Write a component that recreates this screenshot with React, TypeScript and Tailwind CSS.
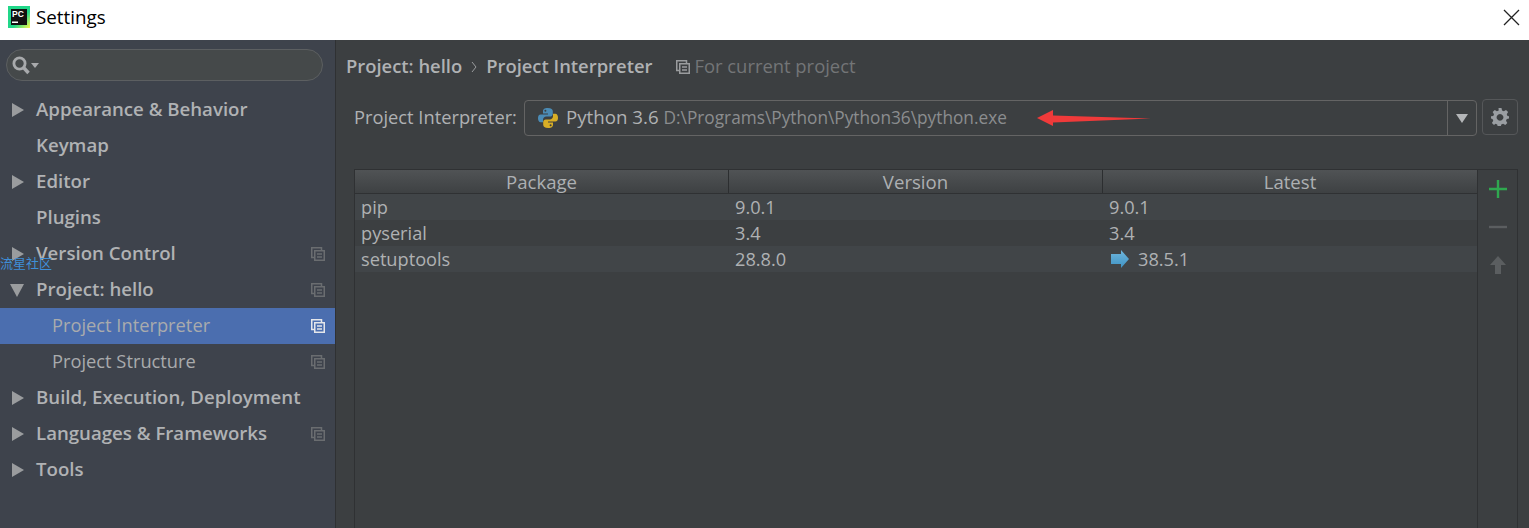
const font = { fontFamily: '"Open Sans", "Noto Sans", sans-serif' };

function CopyIcon({ color = "#6a6d70", className = "" }: { color?: string; className?: string }) {
  return (
    <svg width="14" height="14" viewBox="0 0 14 14" fill="none" className={className}>
      <path d="M4 10.5H.75V.75H10.5V4" stroke={color} strokeWidth="1.5" />
      <rect x="3.75" y="3.75" width="9.5" height="9.5" stroke={color} strokeWidth="1.5" />
      <path d="M6 7h5M6 10h5" stroke={color} strokeWidth="1.5" />
    </svg>
  );
}

function Row({
  label,
  arrow,
  bold = true,
  indent = false,
  copy = false,
  selected = false,
}: {
  label: string;
  arrow?: "right" | "down";
  bold?: boolean;
  indent?: boolean;
  copy?: boolean;
  selected?: boolean;
}) {
  return (
    <div className={`flex h-9 items-center pr-[10px] ${selected ? "bg-[#4b6eaf]" : ""}`}>
      <div className="flex w-9 shrink-0 items-center pl-[12px]">
        {arrow === "right" && <div className="h-0 w-0 border-y-[7px] border-l-[12px] border-y-transparent border-l-[#9a9c9e]" />}
        {arrow === "down" && <div className="-ml-[2px] h-0 w-0 border-x-[7.5px] border-t-[13px] border-x-transparent border-t-[#9a9c9e]" />}
      </div>
      <span
        className={`flex-1 whitespace-nowrap pb-[2px] leading-none ${bold ? "text-[18.65px] font-semibold text-[#b0b2b4]" : "text-[18.3px] text-[#a9abad]"} ${indent ? "pl-4" : ""}`}
      >
        {label}
      </span>
      {copy && <CopyIcon color={selected ? "#e4e6ea" : "#6a6d70"} />}
    </div>
  );
}

function Sidebar() {
  return (
    <aside className="relative w-[336px] shrink-0 border-r border-[#2f3133] bg-[#3e434c]">
      <div className="px-[6px] pt-[9px]">
        <div className="flex h-8 w-[317px] items-center gap-[1px] rounded-2xl border border-[#5c5f61] bg-[#45494a] pl-[5px]">
          <svg width="18" height="19" viewBox="0 0 18 19" fill="none">
            <circle cx="7.5" cy="7.5" r="5.6" stroke="#a8aaac" strokeWidth="2.8" />
            <path d="M11.5 11.5 16.5 17" stroke="#a8aaac" strokeWidth="3.4" />
          </svg>
          <div className="h-0 w-0 border-x-[4px] border-t-[5px] border-x-transparent border-t-[#a8aaac]" />
        </div>
      </div>
      <div className="mt-[11px]">
        <Row label="Appearance & Behavior" arrow="right" />
        <Row label="Keymap" />
        <Row label="Editor" arrow="right" />
        <Row label="Plugins" />
        <Row label="Version Control" arrow="right" copy />
        <Row label="Project: hello" arrow="down" copy />
        <Row label="Project Interpreter" bold={false} indent copy selected />
        <Row label="Project Structure" bold={false} indent copy />
        <Row label="Build, Execution, Deployment" arrow="right" />
        <Row label="Languages & Frameworks" arrow="right" copy />
        <Row label="Tools" arrow="right" />
      </div>
      <span className="absolute left-0 top-[215px] text-[13px] leading-4 text-[#3f8fd8]" style={{ fontFamily: '"Noto Sans CJK SC", sans-serif' }}>
        流星社区
      </span>
    </aside>
  );
}

function PythonIcon() {
  return (
    <svg width="22" height="22" viewBox="0 0 22 22">
      <path d="M10.8 1C7 1 6 2.4 6 4.2V6.4h5v1H3.7C1.8 7.4 1 9 1 11.2s.9 4 2.7 4H6V12.8c0-1.8 1.5-3.2 3.2-3.2h4c1.4 0 2.6-1.2 2.6-2.6V4.2C15.8 2.4 14.4 1 10.8 1Z" fill="#4b8bb5" />
      <circle cx="8.4" cy="3.7" r="1" fill="#3c3f41" />
      <path d="M11.2 21c3.8 0 4.8-1.4 4.8-3.2v-2.2h-5v-1h7.3c1.9 0 2.7-1.6 2.7-3.8s-.9-4-2.7-4H16v2.4c0 1.8-1.5 3.2-3.2 3.2h-4C7.4 12.4 6.2 13.6 6.2 15v2.8c0 1.8 1.4 3.200 5 3.200Z" fill="#d8ae26" />
      <circle cx="13.6" cy="18.3" r="1" fill="#3c3f41" />
    </svg>
  );
}

function Combo() {
  return (
    <div className="relative flex h-9 w-[953px] items-center rounded-[4px] border border-[#646464] pl-[12px]">
      <PythonIcon />
      <span className="ml-[7px] whitespace-nowrap pb-[2px] text-[18.7px] leading-none text-[#b0b2b4]">Python 3.6</span>
      <span className="ml-[5px] whitespace-nowrap pb-[1px] text-[17.25px] leading-none text-[#8b8d8f]">D:\Programs\Python\Python36\python.exe</span>
      <svg className="absolute left-[511px] top-[7px]" width="116" height="20" viewBox="0 0 116 20">
        <path d="M1 10 17 2V7.5L115 10.5 17 14.5V18Z" fill="#f03a3a" />
      </svg>
      <div className="ml-auto flex h-full w-[29px] items-center justify-center border-l border-[#646464]">
        <div className="h-0 w-0 border-x-[6px] border-t-[9px] border-x-transparent border-t-[#b4b6b8]" />
      </div>
    </div>
  );
}

function Header({ children, w, last }: { children: string; w: string; last?: boolean }) {
  return (
    <div className={`flex h-full items-center justify-center pt-[1px] text-[18.6px] leading-none text-[#adb0b3] ${w} ${last ? "" : "border-r border-[#2c2e30]"}`}>
      {children}
    </div>
  );
}

function TableRow({ a, b, c, alt, update }: { a: string; b: string; c: string; alt: boolean; update?: boolean }) {
  return (
    <div className={`flex h-[26px] items-center text-[18.2px] leading-none text-[#afb1b3] ${alt ? "bg-[#414548]" : ""}`}>
      <div className="w-[374px] pl-[6px]">{a}</div>
      <div className="w-[374px] pl-[6px]">{b}</div>
      <div className="flex flex-1 items-center gap-[9px] pl-[6px]">
        {update && (
          <svg className="ml-[2px]" width="18" height="18" viewBox="0 0 18 18">
            <defs>
              <linearGradient id="upd" x1="0" y1="0" x2="0" y2="1">
                <stop offset="0" stopColor="#6fb6dc" />
                <stop offset="1" stopColor="#3f93c4" />
              </linearGradient>
            </defs>
            <path d="M0 4h10V0l8 9-8 9v-4H0Z" fill="url(#upd)" />
          </svg>
        )}
        {c}
      </div>
    </div>
  );
}

export default function App() {
  return (
    <div className="flex h-[528px] w-[1529px] flex-col overflow-hidden bg-[#3c3f41]" style={font}>
      <header className="flex h-10 shrink-0 items-center bg-white pb-[6px] pl-2 pr-[9px]">
        <svg width="22" height="22" viewBox="0 0 22 22">
          <defs>
            <linearGradient id="pc" x1="0" y1="0" x2="1" y2="1">
              <stop offset="0" stopColor="#21d789" />
              <stop offset="0.6" stopColor="#21d789" />
              <stop offset="1" stopColor="#fcf84a" />
            </linearGradient>
          </defs>
          <rect width="22" height="22" fill="url(#pc)" />
          <rect x="3" y="3" width="16" height="16" fill="#111" />
          <text x="4" y="11" fontSize="8.5" fontWeight="700" fill="#fff" fontFamily="Liberation Sans">PC</text>
          <rect x="4" y="15.5" width="6" height="1.5" fill="#fff" />
        </svg>
        <span className="ml-[6px] text-[18.8px] leading-none text-black">Settings</span>
        <svg className="ml-auto" width="17" height="17" viewBox="0 0 17 17">
          <path d="M1 1 16 16M16 1 1 16" stroke="#222" strokeWidth="1.3" />
        </svg>
      </header>
      <div className="flex min-h-0 flex-1">
        <Sidebar />
        <main className="flex min-w-0 flex-1 flex-col">
          <div className="flex h-[52px] items-center pl-[10px] pt-[1px] text-[18.4px] leading-none">
            <span className="font-semibold text-[#b0b2b4]">Project: hello</span>
            <svg className="mx-[9px]" width="6" height="12" viewBox="0 0 6 12" fill="none">
              <path d="M1 1 5 6 1 11" stroke="#9a9c9e" strokeWidth="1" />
            </svg>
            <span className="font-semibold text-[#b0b2b4]">Project Interpreter</span>
            <CopyIcon color="#9a9c9e" className="ml-6" />
            <span className="ml-[4px] text-[#737577]">For current project</span>
          </div>
          <div className="ml-[18px] mt-[8px] flex items-center">
            <span className="w-[170px] whitespace-nowrap pb-[2px] text-[18.3px] leading-none text-[#afb1b3]">Project Interpreter:</span>
            <Combo />
            <div className="-mt-[2px] ml-[5px] flex h-9 w-9 items-center justify-center rounded-[4px] border border-[#555759]">
              <svg width="18" height="18" viewBox="0 0 24 24" fill="#9a9ea2">
                <path fillRule="evenodd" d="M10 0h4l.7 3.3 2.4 1L20 2.5 22.8 5.3 21 8.2l1 2.4L24 11v3l-3 .7-1 2.4 1.8 2.9-2.8 2.8-2.9-1.8-2.4 1-.7 3h-4l-.7-3-2.400-1L4 22.800 1.200 20 3 17.100l-1-2.400L0 14v-3l3-.4 1-2.400L2.200 5.300 5 2.500l2.900 1.800 2.400-1ZM12 8a4.500 4.500 0 1 0 .01 0Z" />
              </svg>
            </div>
          </div>
          <div className="ml-[18px] mt-[33px] flex min-h-0 flex-1">
            <div className="w-[1123px] border-l border-t border-[#2f3133]">
              <div className="flex h-6 border-b border-[#2f3133] bg-gradient-to-b from-[#505355] to-[#3e4143]">
                <Header w="w-[374px]">Package</Header>
                <Header w="w-[374px]">Version</Header>
                <Header w="flex-1" last>Latest</Header>
              </div>
              <TableRow a="pip" b="9.0.1" c="9.0.1" alt />
              <TableRow a="pyserial" b="3.4" c="3.4" alt={false} />
              <TableRow a="setuptools" b="28.8.0" c="38.5.1" alt update />
            </div>
            <div className="flex w-[41px] flex-col items-center gap-[20px] border-x border-t border-[#2f3133] pt-[10px]">
              <svg width="18" height="18" viewBox="0 0 18 18"><path d="M0 9h18M9 0v18" stroke="#2fa84f" strokeWidth="2.4" /></svg>
              <svg width="18" height="18" viewBox="0 0 18 18"><path d="M0 9h18" stroke="#5b5e60" strokeWidth="2.4" /></svg>
              <svg width="16" height="18" viewBox="0 0 16 18"><path d="M8 0 16 9H11V18H5V9H0Z" fill="#5b5e60" /></svg>
            </div>
          </div>
        </main>
      </div>
    </div>
  );
}
